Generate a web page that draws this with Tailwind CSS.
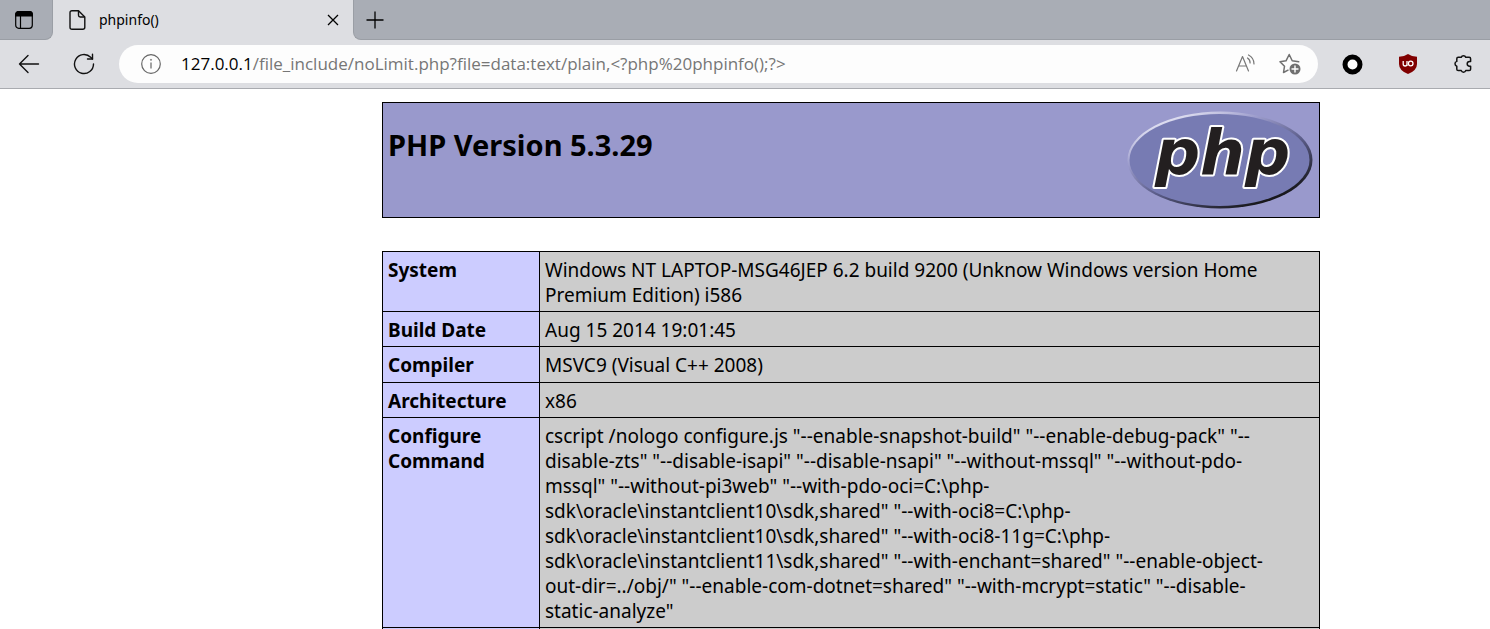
<!DOCTYPE html>
<html lang="en">
<head>
<meta charset="utf-8">
<title>phpinfo()</title>
<script src="https://cdn.jsdelivr.net/npm/@tailwindcss/browser@4"></script>
</head>
<body class="min-h-screen overflow-hidden bg-white font-['Noto_Sans','Open_Sans',sans-serif] text-black">
  <header>
    <!-- Tab strip -->
    <div class="flex h-10 items-stretch bg-[#dddee2]">
      <div class="flex w-[53px] items-center rounded-br-lg border-r border-b border-[#9a9ea5] bg-[#a9adb5] pl-[15px]">
        <button aria-label="Tab actions" class="size-[18px]">
          <svg viewBox="0 0 18 18" class="size-[18px]" fill="none" stroke="#000" stroke-width="1.2"><rect x=".7" y=".7" width="16.6" height="16.6" rx="3"/><path d="M5.5 5v12"/><path d="M.7 5V3.5Q.7.7 3.500.7h11q2.800 0 2.800 2.800V5z" fill="#000"/></svg>
        </button>
      </div>
      <div class="flex w-[300px] items-center pl-4 pr-[14px]">
        <svg viewBox="0 0 17 20" class="h-5 w-[17px]" fill="none" stroke="#111" stroke-width="1.4" stroke-linejoin="round"><path d="M3 .7h6.500L15.800 7v10.300q0 2-2 2H3q-2 0-2-2V2.700q0-2 2-2z"/><path d="M9.500.7v4.600q0 1.700 1.700 1.700h4.600"/></svg>
        <span class="ml-[13px] flex-1 text-sm">phpinfo()</span>
        <button aria-label="Close tab" class="size-3">
          <svg viewBox="0 0 12 12" class="size-3" stroke="#000" stroke-width="1.3"><path d="M1 1l10 10M11 1L1 11"/></svg>
        </button>
      </div>
      <div class="flex flex-1 items-center rounded-bl-lg border-b border-l border-[#9a9ea5] bg-[#a9adb5] pl-3">
        <button aria-label="New tab" class="size-[18px]">
          <svg viewBox="0 0 18 18" class="size-[18px]" stroke="#000" stroke-width="1.3"><path d="M9 .5v17M.5 9h17"/></svg>
        </button>
      </div>
    </div>
    <!-- Address bar -->
    <div class="flex h-[49px] items-center border-b border-[#a9abb0] bg-[#dddee2] pl-[18px] pr-[17px]">
      <button aria-label="Back" class="h-5 w-[22px]">
        <svg viewBox="0 0 22 20" class="h-5 w-[22px]" fill="none" stroke="#111" stroke-width="1.4" stroke-linecap="round" stroke-linejoin="round"><path d="M20.500 10H1.500M10 1.500L1.500 10l8.500 8.500"/></svg>
      </button>
      <button aria-label="Refresh" class="ml-[33px] size-[22px]">
        <svg viewBox="0 0 22 22" class="size-[22px]" fill="none" stroke="#111" stroke-width="1.4" stroke-linecap="round" stroke-linejoin="round"><path d="M20.500 11A9.500 9.500 0 1 1 17.700 4.300L19.500 6"/><path d="M19.500 1.200V6h-5"/></svg>
      </button>
      <div class="ml-6 flex h-[38px] flex-1 items-center rounded-full bg-[#fdfdfd] pl-[22px] pr-[17px]">
        <svg viewBox="0 0 20 20" class="size-5" fill="none" stroke="#666" stroke-width="1.2"><circle cx="10" cy="10" r="9.300"/><path d="M10 8.500v6"/><circle cx="10" cy="5.800" r=".6" fill="#666" stroke-width=".6"/></svg>
        <a href="#" class="ml-5 flex-1 font-['Open_Sans',sans-serif] whitespace-nowrap text-[17px] leading-6 text-[#767676]"><span class="text-black">127.0.0.1</span>/file_include/noLimit.php?file=data:text/plain,&lt;?php%20phpinfo();?&gt;</a>
        <button aria-label="Read aloud" class="h-5 w-[22px]">
          <svg viewBox="0 0 22 20" class="h-5 w-[22px]" fill="none" stroke="#777" stroke-width="1.2" stroke-linecap="round" stroke-linejoin="round"><path d="M1.500 17L7.500 2.500l6 14.500M3.600 12h7.800"/><path d="M12.500 4q2.700 1.800 2.600 5M13.500 1q5.500 2.800 5.500 9"/></svg>
        </button>
        <button aria-label="Add to favorites" class="ml-[22px] size-[22px]">
          <svg viewBox="0 0 22 22" class="size-[22px]" fill="none" stroke="#707070" stroke-width="1.500" stroke-linecap="round" stroke-linejoin="round"><path d="M9 17.200L4.500 19.500l1-6.200L1 8.700l6-.9L10.200 1.500l3 6.300 6.500 1"/><circle cx="16" cy="16" r="5.500" fill="#707070" stroke="none"/><path d="M16 13v6M13 16h6" stroke="#fff" stroke-width="1.400"/></svg>
        </button>
      </div>
      <button aria-label="Circle extension" class="ml-6 size-[21px]">
        <svg viewBox="0 0 21 21" class="size-[21px]" fill="#fff" stroke="#000" stroke-width="5"><circle cx="10.500" cy="10.500" r="7.500"/></svg>
      </button>
      <button aria-label="uBlock Origin" class="ml-9 h-5 w-[18px]">
        <svg viewBox="0 0 18 20" class="h-5 w-[18px]" fill="none"><path d="M9 0Q5.500 2.600 0 2.800V10q0 6.500 9 10 9-3.500 9-10V2.800Q12.500 2.600 9 0z" fill="#800000"/><path d="M4.200 7v3.200q0 1.800 1.900 1.800t1.900-1.800V7M8 12V7" stroke="#fff" stroke-width="1.300"/><circle cx="11.700" cy="9.500" r="2.300" stroke="#fff" stroke-width="1.300"/></svg>
      </button>
      <button aria-label="Extensions" class="ml-9 size-5">
        <svg viewBox="0 0 20 20" class="size-5" fill="none" stroke="#111" stroke-width="1.500" stroke-linejoin="round"><path d="M5.200 3.300h3.100a2.300 2.300 0 0 1 4.400 0h3.500q1.400 0 1.400 1.400v2.700h-1a2.400 2.400 0 0 0 0 4.800h1v3q0 1.400-1.400 1.400h-3.500a2.300 2.300 0 0 1-4.400 0H5.200q-1.400 0-1.400-1.400v-3a2.500 2.500 0 0 1 0-4.800V4.700q0-1.400 1.400-1.400z"/></svg>
      </button>
    </div>
  </header>

  <main class="pt-[13px] pl-[382px] pr-[170px]">
    <section class="flex h-[116px] items-start justify-between border border-black bg-[#9999cc] pl-[5px] pr-[6px]">
      <h1 class="pt-[22px] text-[29px] leading-10 font-bold">PHP Version 5.3.29</h1>
      <a href="#" aria-label="PHP" class="pt-2">
        <svg viewBox="0 0 186 98" class="h-[98px] w-[186px]">
          <defs>
            <linearGradient id="rim" x1=".2" y1="0" x2=".85" y2=".9"><stop offset="0" stop-color="#f4f4fc"/><stop offset=".3" stop-color="#9c9ccc"/><stop offset=".6" stop-color="#5a5c88"/><stop offset="1" stop-color="#111"/></linearGradient>
          </defs>
          <ellipse cx="93" cy="49" rx="92.500" ry="48.500" fill="url(#rim)"/>
          <ellipse cx="92.500" cy="49" rx="90" ry="46" fill="#777bb3"/>
          <text x="28" y="63" class="font-['DejaVu_Sans',sans-serif] text-[63px] font-bold italic" fill="#231f20" stroke="#fff" stroke-width="4" paint-order="stroke" stroke-linejoin="round">php</text>
        </svg>
      </a>
    </section>

    <table class="mt-[33px] w-full border-collapse text-[19px] leading-[25px]">
      <colgroup><col class="w-[157px]"><col></colgroup>
      <tbody class="[&_td]:border [&_td]:border-black [&_td]:bg-[#cccccc] [&_td]:px-[5px] [&_td]:pt-1.5 [&_td]:pb-[3px] [&_td]:align-top [&_th]:border [&_th]:border-black [&_th]:bg-[#ccccff] [&_th]:px-[5px] [&_th]:pt-1.5 [&_th]:pb-[3px] [&_th]:text-left [&_th]:align-top">
        <tr><th scope="row">System</th><td>Windows NT LAPTOP-MSG46JEP 6.2 build 9200 (Unknow Windows version Home<br>Premium Edition) i586</td></tr>
        <tr><th scope="row">Build Date</th><td>Aug 15 2014 19:01:45</td></tr>
        <tr class="h-9"><th scope="row">Compiler</th><td>MSVC9 (Visual C++ 2008)</td></tr>
        <tr><th scope="row">Architecture</th><td>x86</td></tr>
        <tr><th scope="row">Configure Command</th><td>cscript /nologo configure.js "--enable-snapshot-build" "--enable-debug-pack" "--<br>disable-zts" "--disable-isapi" "--disable-nsapi" "--without-mssql" "--without-pdo-<br>mssql" "--without-pi3web" "--with-pdo-oci=C:\php-<br>sdk\oracle\instantclient10\sdk,shared" "--with-oci8=C:\php-<br>sdk\oracle\instantclient10\sdk,shared" "--with-oci8-11g=C:\php-<br>sdk\oracle\instantclient11\sdk,shared" "--with-enchant=shared" "--enable-object-<br>out-dir=../obj/" "--enable-com-dotnet=shared" "--with-mcrypt=static" "--disable-<br>static-analyze"</td></tr>
        <tr><td class="!bg-[#ccccff]"></td><td></td></tr>
      </tbody>
    </table>
  </main>
</body>
</html>
